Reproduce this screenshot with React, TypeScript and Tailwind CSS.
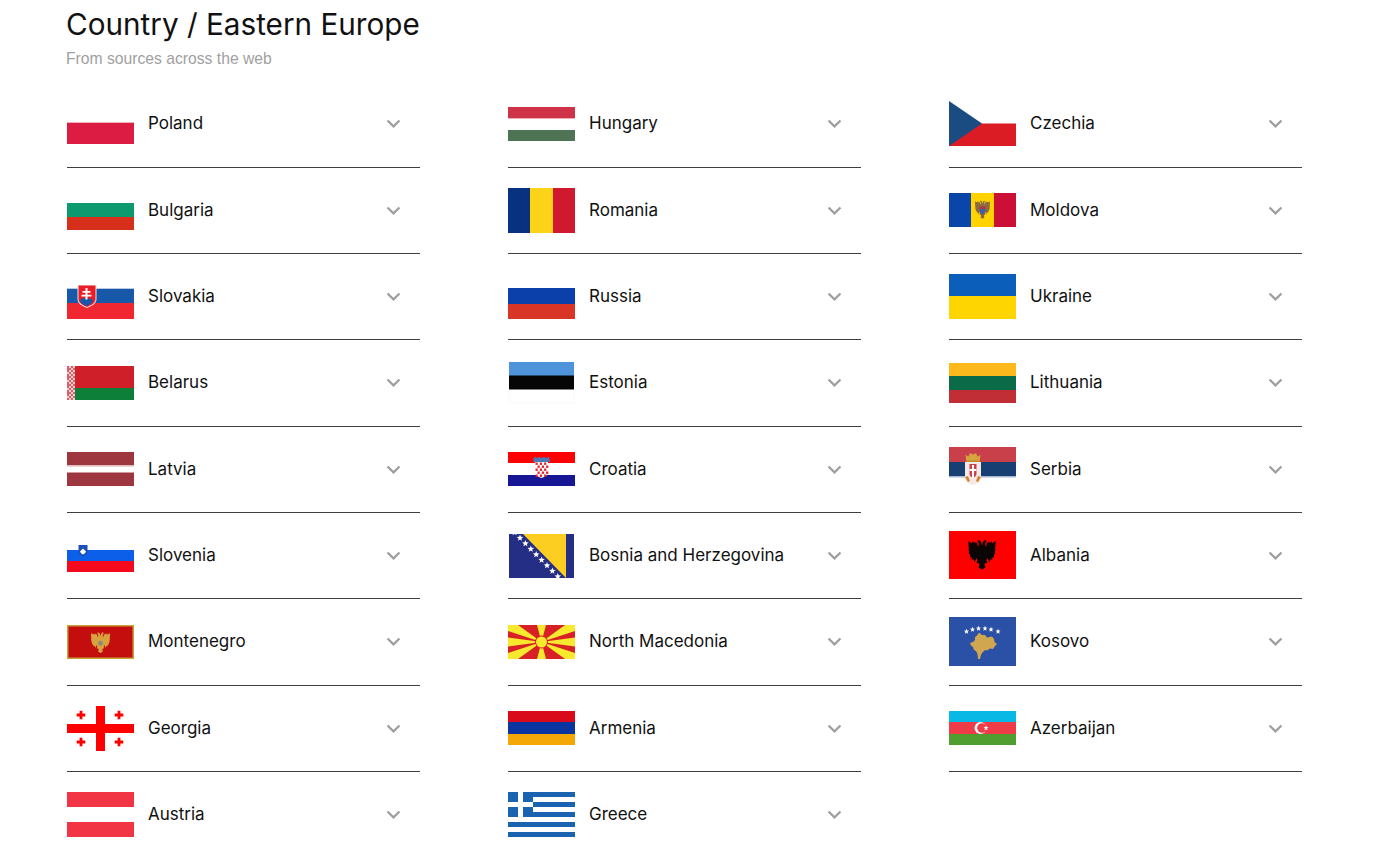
import type { ReactNode } from 'react'

function Stripes({ top, rows }: { top: number; rows: [string, number][] }) {
  let y = top
  return (
    <>
      {rows.map(([color, h], idx) => {
        const el = <rect key={idx} x="0" y={y} width="67" height={h} fill={color} />
        y += h
        return el
      })}
    </>
  )
}

const star = (cx: number, cy: number, r: number) => {
  const pts: string[] = []
  for (let i = 0; i < 10; i++) {
    const rad = i % 2 === 0 ? r : r * 0.42
    const a = -Math.PI / 2 + (i * Math.PI) / 5
    pts.push(`${(cx + rad * Math.cos(a)).toFixed(2)},${(cy + rad * Math.sin(a)).toFixed(2)}`)
  }
  return pts.join(' ')
}

// right half of the double headed eagle, mirrored for the left
const eagleHalf = [
  [0, -9], [0.8, -12.5], [3, -14.5], [5, -13.5], [3.6, -12.4], [3.2, -9], [4.2, -8], [5, -12.5], [6, -11.2], [7, -13],
  [8, -11.2], [9.5, -13.5], [10.2, -11.2], [13.5, -13.5], [13.5, -8], [13, -7], [13.5, -4], [12.8, -3.5], [13.2, -0.5],
  [12, -0.5], [12, 3], [10.5, 2.5], [10.2, 5.5], [8.5, 4.5], [7.5, 8], [5.5, 3.5], [4.5, 6], [5.5, 8.5], [3.5, 8.5], [2.5, 10], [3.5, 13], [0, 15],
]
const eaglePoints = [...eagleHalf, ...[...eagleHalf].reverse().map(([x, y]) => [-x, y])]
  .map(([x, y]) => `${x},${y}`)
  .join(' ')

const Eagle = ({ fill }: { fill: string }) => <polygon fill={fill} points={eaglePoints} />

const belarusCells: number[][] = []
for (let r = 0; r < 17; r++) {
  for (let c = 0; c < 4; c++) {
    if ((r + c) % 2 === 0 || (r % 4 === 1 && c % 3 === 0)) belarusCells.push([c, r])
  }
}

const flags: Record<string, ReactNode> = {
  Poland: (
    <>
      <rect x="0" y="21" width="67" height="22" fill="#dc1c43" />
      <rect x="0" y="21" width="67" height="1" fill="#eeb3bf" />
    </>
  ),
  Bulgaria: <Stripes top={15} rows={[['#0b9a70', 14], ['#d62f1b', 13]]} />,
  Slovakia: (
    <>
      <Stripes top={14} rows={[['#1858a8', 15], ['#f02730', 16]]} />
      <rect x="0" y="14" width="67" height="1" fill="#b9c9e2" />
      <path d="M10.500 11h19v14c0 5-5 7-9.500 9-4.500-2-9.500-4-9.500-9z" fill="#e4e8f0" />
      <path d="M11.500 11.500h17v13.500c0 4-4 6-8.500 8-4.500-2-8.500-4-8.500-8z" fill="#ee1c25" />
      <path d="M13 27c2-4 3-3 4-2 1-2 4-2 5 0 1-1 3-1 4 2-2 3-4 4-6.500 5-3-1-5-2-6.500-5z" fill="#1858a8" />
      <path d="M18.500 14h2v3h3v1.700h-3v2h4v1.800h-4v3h-2v-3h-4v-1.800h4v-2h-3V17h3z" fill="#fff" />
    </>
  ),
  Belarus: (
    <>
      <Stripes top={6} rows={[['#cf1f28', 22], ['#0d7f39', 12]]} />
      <rect x="0" y="6" width="8" height="34" fill="#f2cfcf" />
      {belarusCells.map(([c, r]) => (
        <rect key={`${c}-${r}`} x={c * 2} y={6 + r * 2} width="2" height="2" fill="#d9626a" />
      ))}
    </>
  ),
  Latvia: (
    <>
      <Stripes top={5} rows={[['#9e3640', 13.500], ['#ffffff', 7], ['#9e3640', 13.500]]} />
      <rect x="0" y="18.500" width="67" height="1" fill="#d8a8ad" />
    </>
  ),
  Slovenia: (
    <>
      <Stripes top={17} rows={[['#0b5fe8', 11], ['#f5091d', 11]]} />
      <path d="M11.500 12h9v6c0 3-2.500 4.500-4.500 5.500-2-1-4.500-2.500-4.500-5.500z" fill="#1d4fb8" />
      <path d="M13 18.500l3-3 3 3c-.5 1.500-2 2.500-3 3-1-.5-2.500-1.500-3-3z" fill="#fff" />
    </>
  ),
  Montenegro: (
    <>
      <rect x="0" y="6" width="67" height="34" fill="#c9a23c" />
      <rect x="1.500" y="7.500" width="64" height="31" fill="#c40d0d" />
      <g transform="translate(33.500 23.500) scale(.7)">
        <Eagle fill="#d8a23f" />
        <circle cx="0" cy="1" r="3.500" fill="#8d8a78" />
      </g>
    </>
  ),
  Georgia: (
    <>
      <rect x="29" y="0" width="9" height="45" fill="#ff0000" />
      <rect x="0" y="18" width="67" height="9" fill="#ff0000" />
      {[[14, 9], [52, 9], [14, 36], [52, 36]].map(([x, y], idx) => (
        <path key={idx} transform={`translate(${x} ${y})`} d="M-1.400-4.300h2.800v2.900h2.900v2.800H1.400v2.900h-2.800V1.400h-2.900v-2.800h2.900z" fill="#ff0000" />
      ))}
    </>
  ),
  Austria: <Stripes top={0} rows={[['#f23545', 15], ['#ffffff', 15], ['#f23545', 15]]} />,
  Hungary: (
    <>
      <Stripes top={6} rows={[['#cf3348', 11], ['#ffffff', 12], ['#4e7455', 11]]} />
      <rect x="0" y="17" width="67" height="1" fill="#eeb0b8" />
    </>
  ),
  Romania: (
    <>
      <rect x="0" y="0" width="22" height="45" fill="#08327f" />
      <rect x="22" y="0" width="23" height="45" fill="#fdd319" />
      <rect x="45" y="0" width="22" height="45" fill="#d0192e" />
    </>
  ),
  Russia: <Stripes top={14} rows={[['#0b3fa9', 16], ['#d83527', 15]]} />,
  Estonia: (
    <>
      <rect x="1" y="2" width="65" height="41" fill="#fff" stroke="#f5f5f5" strokeWidth=".6" />
      <rect x="1" y="2" width="65" height="14" fill="#4f94da" />
      <rect x="1" y="15.500" width="65" height="14" fill="#060606" />
    </>
  ),
  Croatia: (
    <>
      <Stripes top={5} rows={[['#ff0000', 11], ['#ffffff', 12], ['#171796', 11]]} />
      <path d="M26 10l3 1 2-1 2.500 1 2.500-1 2 1 3-1 1 5H25z" fill="#4a7ab5" />
      <path d="M27 15h13v10c0 3-3 5-6.500 6-3.500-1-6.500-3-6.500-6z" fill="#fff" />
      {[0, 1, 2, 3, 4].map((r) =>
        [0, 1, 2].map((c) => (
          <rect key={`${r}-${c}`} x={27.500 + c * 4.300 + (r % 2 ? 2 : 0)} y={15.500 + r * 3} width="2.200" height="2.400" fill="#e8202a" />
        ))
      )}
    </>
  ),
  Bosnia: (
    <>
      <rect x="1" y="1" width="65" height="44" fill="#252e85" />
      <path d="M15 1h43v44z" fill="#fdce22" />
      <svg x="1" y="1" width="65" height="44" viewBox="1 1 65 44">
        {[-1, 0, 1, 2, 3, 4, 5, 6, 7].map((i) => (
          <polygon key={i} points={star(12 + i * 5.400, 5 + i * 5.500, 3.500)} fill="#fff" />
        ))}
      </svg>
    </>
  ),
  Macedonia: (
    <>
      <rect x="0" y="6" width="67" height="34" fill="#d82126" />
      <path d="M29 6h9l-4.500 17zM29 40h9l-4.500-17zM0 18.500v9l33.500-4.500zM67 18.500v9l-33.500-4.500zM0 6h10l23.500 17L0 12zM67 6H57L33.500 23 67 12zM0 40h10L33.500 23 0 34zM67 40H57L33.500 23 67 34z" fill="#f8e92e" />
      <circle cx="33.500" cy="23" r="6.500" fill="#d82126" />
      <circle cx="33.500" cy="23" r="5.500" fill="#f8e92e" />
    </>
  ),
  Armenia: <Stripes top={5} rows={[['#d90b1b', 11], ['#0a35a0', 12], ['#f3a807', 11]]} />,
  Greece: (
    <>
      <Stripes top={0} rows={[['#1a63b0', 5], ['#ffffff', 5], ['#1a63b0', 5], ['#ffffff', 5], ['#1a63b0', 5], ['#ffffff', 5], ['#1a63b0', 5], ['#ffffff', 5], ['#1a63b0', 5]]} />
      <rect x="0" y="0" width="25" height="25" fill="#1a63b0" />
      <rect x="10" y="0" width="5" height="25" fill="#fff" />
      <rect x="0" y="10" width="25" height="5" fill="#fff" />
    </>
  ),
  Czechia: (
    <>
      <rect x="0" y="22.500" width="67" height="22.500" fill="#dc1c24" />
      <path d="M0 0l33 22.500L0 45z" fill="#1a4c82" />
    </>
  ),
  Moldova: (
    <>
      <rect x="0" y="5" width="22" height="34" fill="#0a46aa" />
      <rect x="22" y="5" width="23" height="34" fill="#ffd200" />
      <rect x="45" y="5" width="22" height="34" fill="#cc0f36" />
      <g transform="translate(33.500 21.500) scale(.55 .62)">
        <Eagle fill="#8a6a40" />
        <path d="M-5-5h10v8c0 3-3 4-5 5-2-1-5-2-5-5z" fill="#b5333a" />
        <path d="M-5-1h10v4c0 3-3 4-5 5-2-1-5-2-5-5z" fill="#3a62a8" />
      </g>
    </>
  ),
  Ukraine: <Stripes top={0} rows={[['#0b5fbb', 22], ['#ffd500', 23]]} />,
  Lithuania: <Stripes top={3} rows={[['#fdb91c', 13], ['#0b6a47', 14], ['#c12e35', 13]]} />,
  Serbia: (
    <>
      <Stripes top={0} rows={[['#c9404a', 15], ['#173f72', 14], ['#a9b8d2', 1.500]]} />
      <path d="M16.500 8l3 1.500L21 6l3 1.500L27 6l1.500 3.500 3-1.500-1 7h-13z" fill="#d7a33e" />
      <path d="M17.500 13.500h13v2h-13z" fill="#b98a30" />
      <path d="M16 15h16v16c0 4-4 6-8 7-4-1-8-3-8-7z" fill="#f4e9e6" />
      <path d="M20.500 17h7v10c0 2-2 3-3.500 4-1.500-1-3.500-2-3.500-4z" fill="#c9404a" />
      <path d="M23 18h2v13h-2zM20.500 22h7v2h-7z" fill="#fff" />
      <path d="M16 30l3 5 2-1-2-5zM32 30l-3 5-2-1 2-5z" fill="#d7802e" />
    </>
  ),
  Albania: (
    <>
      <rect x="0" y="-2" width="67" height="48" fill="#ff0000" />
      <g transform="translate(33 21.500)">
        <Eagle fill="#0b0505" />
      </g>
    </>
  ),
  Kosovo: (
    <>
      <rect x="0" y="-2" width="67" height="49" fill="#2a51a6" />
      {[[17.500, 12.500], [23.500, 10.500], [29.500, 9.500], [36, 9.500], [42, 10.500], [49, 12.500]].map(([x, y], idx) => (
        <polygon key={idx} points={star(x, y, 2.700)} fill="#fff" />
      ))}
      <polygon points="30,13.500 33,16 36,16 38,18.500 43,17.500 45,20 45.500,23 48,25 46,27 44,30 41,29.500 38,31.500 36,31 33,34 32,36 31,40 29,40 28.500,35 27,32 25,31 24,28 22,26.500 21,24 24,23 26,21 26,18 28,16.500" fill="#d0a650" />
    </>
  ),
  Azerbaijan: (
    <>
      <Stripes top={5} rows={[['#0ab8e6', 11], ['#ef3a48', 12], ['#509e2f', 11]]} />
      <circle cx="31.500" cy="22" r="6" fill="#fff" />
      <circle cx="33" cy="22" r="4.800" fill="#ef3a48" />
      <polygon points={star(37, 22, 2.700)} fill="#fff" />
    </>
  ),
}

const countries = [
  ['Poland', 'Poland'], ['Hungary', 'Hungary'], ['Czechia', 'Czechia'],
  ['Bulgaria', 'Bulgaria'], ['Romania', 'Romania'], ['Moldova', 'Moldova'],
  ['Slovakia', 'Slovakia'], ['Russia', 'Russia'], ['Ukraine', 'Ukraine'],
  ['Belarus', 'Belarus'], ['Estonia', 'Estonia'], ['Lithuania', 'Lithuania'],
  ['Latvia', 'Latvia'], ['Croatia', 'Croatia'], ['Serbia', 'Serbia'],
  ['Slovenia', 'Slovenia'], ['Bosnia', 'Bosnia and Herzegovina'], ['Albania', 'Albania'],
  ['Montenegro', 'Montenegro'], ['Macedonia', 'North Macedonia'], ['Kosovo', 'Kosovo'],
  ['Georgia', 'Georgia'], ['Armenia', 'Armenia'], ['Azerbaijan', 'Azerbaijan'],
  ['Austria', 'Austria'], ['Greece', 'Greece'],
]

function CountryRow({ flag, name, last }: { flag: string; name: string; last: boolean }) {
  return (
    <div className={`flex items-center h-[86.33px] border-b ${last ? 'border-transparent' : 'border-[#3c4043]'}`}>
      <svg viewBox="0 0 67 45" className="w-[67px] h-[45px] shrink-0 overflow-visible">
        {flags[flag]}
      </svg>
      <span className="ml-[14px] flex-1 text-[17px] leading-6 text-[#111] -mt-[1.4px]">{name}</span>
      <svg viewBox="0 0 24 24" className="w-[27px] h-[27px] mr-[13px] fill-[#9e9e9e]">
        <path d="M16.590 8.590 12 13.170 7.410 8.590 6 10l6 6 6-6z" />
      </svg>
    </div>
  )
}

export default function App() {
  return (
    <div className="h-screen overflow-hidden bg-white pl-[67px] [font-family:Inter,sans-serif]">
      <h1 className="text-[29.7px] leading-[36px] pt-[6px] -ml-px text-[#111]">Country / Eastern Europe</h1>
      <p className="mt-[8px] h-[31.33px] -ml-px text-[15.7px] leading-[18px] text-[#a0a0a0] font-['Liberation_Sans',Arial,sans-serif]">From sources across the web</p>
      <div className="grid grid-cols-3 gap-x-[88px] w-[1235px]">
        {countries.map(([flag, name], idx) => (
          <CountryRow key={flag} flag={flag} name={name} last={idx >= 24} />
        ))}
      </div>
    </div>
  )
}
